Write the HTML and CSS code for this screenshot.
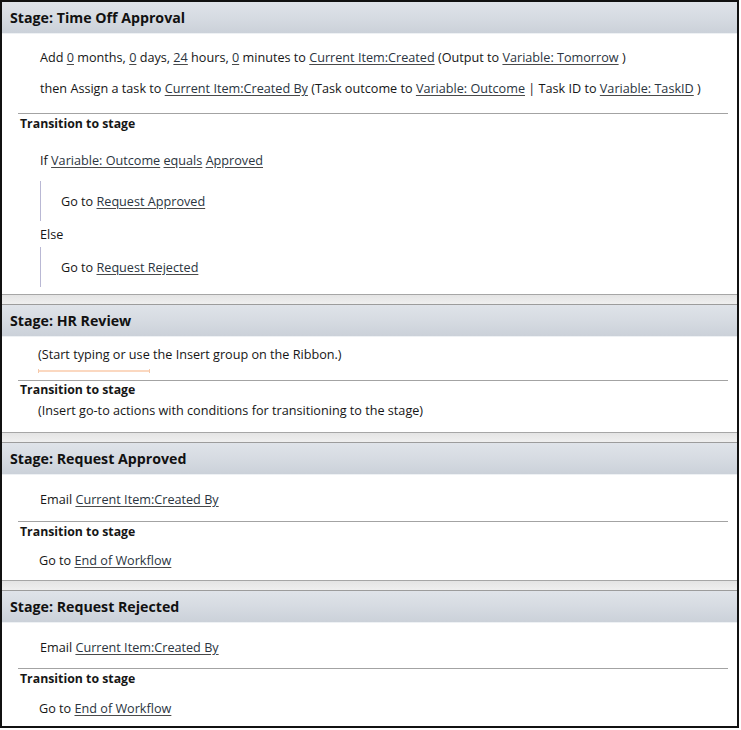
FILE: index.html
```html
<!DOCTYPE html>
<html>
<head>
<meta charset="utf-8">
<link rel="stylesheet" href="styles.css">
</head>
<body>
<div class="frame">
  <section class="stage s1">
    <div class="head">Stage: Time Off Approval</div>
    <div class="body">
      <div class="row r-act">Add <u>0</u> months, <u>0</u> days, <u>24</u> hours, <u>0</u> minutes to <u>Current Item:Created</u> (Output to <u>Variable: Tomorrow</u> )</div>
      <div class="row r-act">then Assign a task to <u>Current Item:Created By</u> (Task outcome to <u>Variable: Outcome</u> | Task ID to <u>Variable: TaskID</u> )</div>
      <div class="sep"></div>
      <div class="trans">Transition to stage</div>
      <div class="row r-if">If <u>Variable: Outcome</u> <u>equals</u> <u>Approved</u></div>
      <div class="branch">Go to <u>Request Approved</u></div>
      <div class="row r-else">Else</div>
      <div class="branch">Go to <u>Request Rejected</u></div>
    </div>
  </section>
  <section class="stage s2">
    <div class="head">Stage: HR Review</div>
    <div class="body">
      <div class="row hint">(Start typing or use the Insert group on the Ribbon.)</div>
      <div class="caret"></div>
      <div class="sep"></div>
      <div class="trans">Transition to stage</div>
      <div class="row hint hint2">(Insert go-to actions with conditions for transitioning to the stage)</div>
    </div>
  </section>
  <section class="stage s3">
    <div class="head">Stage: Request Approved</div>
    <div class="body">
      <div class="row r-email">Email <u>Current Item:Created By</u></div>
      <div class="sep"></div>
      <div class="trans">Transition to stage</div>
      <div class="row r-goto">Go to <u>End of Workflow</u></div>
    </div>
  </section>
  <section class="stage s4">
    <div class="head">Stage: Request Rejected</div>
    <div class="body">
      <div class="row r-email">Email <u>Current Item:Created By</u></div>
      <div class="sep"></div>
      <div class="trans">Transition to stage</div>
      <div class="row r-goto">Go to <u>End of Workflow</u></div>
    </div>
  </section>
</div>
</body>
</html>
```
FILE: styles.css
```css
* { box-sizing: border-box; }
html, body { margin: 0; padding: 0; background: #fff; }
body {
  font-family: "Open Sans", "Noto Sans", "Liberation Sans", sans-serif;
  font-size: 12.65px;
  color: #161616;
}
.frame {
  width: 739px;
  height: 728px;
  border: 2px solid #111;
  overflow: hidden;
  background: #fff;
}
.stage + .stage {
  border-top: 1px solid #a6a6a6;
}
.stage + .stage::before {
  content: "";
  display: block;
  height: 9px;
  background: linear-gradient(#e4e4e4, #efefef);
  border-bottom: 1px solid #9c9c9c;
}
.head {
  height: 32px;
  line-height: 32px;
  padding-left: 8px;
  font-size: 14.2px;
  font-weight: 700;
  color: #111;
  background: linear-gradient(#dfe3e9 0%, #d6dbe2 50%, #cbd1d9 100%);
  border-bottom: 1px solid #eef1f4;
}
.body {
  display: flex;
  flex-direction: column;
  align-items: flex-start;
}
u {
  color: #2b3541;
  text-decoration: underline;
  text-decoration-color: #4a4a4a;
  text-underline-offset: 2px;
}
.row {
  line-height: 18px;
  padding-left: 38px;
  white-space: nowrap;
}
.r-act { line-height: 31px; }
.s1 .body { padding-top: 8px; padding-bottom: 7px; }
.sep {
  align-self: stretch;
  height: 1px;
  background: #a3a3a3;
  margin-left: 16px;
  margin-right: 9px;
}
.s1 .sep { margin-top: 9px; }
.trans {
  font-weight: 700;
  font-size: 12.3px;
  line-height: 18px;
  padding-left: 18px;
  white-space: nowrap;
}
.s1 .trans { line-height: 19px; }
.r-if { margin-top: 17px; line-height: 20px; }
.branch {
  margin-left: 38px;
  margin-top: 11px;
  height: 40px;
  line-height: 40px;
  padding-left: 20px;
  border-left: 1px solid #b9b8d4;
  white-space: nowrap;
}
.r-else { margin-top: 4px; }
.r-else + .branch { margin-top: 4px; }

.s2 .body { padding-top: 8px; padding-bottom: 13px; }
.hint { padding-left: 36px; }
.caret {
  margin-left: 36px;
  margin-top: 6px;
  width: 112px;
  height: 4px;
  border-left: 1px solid #f6c9aa;
  border-right: 1px solid #f6c9aa;
  background: linear-gradient(transparent 1px, #fbd8c0 1px, #fbd8c0 3px, transparent 3px);
}
.s2 .sep { margin-top: 7px; }
.hint2 { margin-top: 2px; }

.s3 .body, .s4 .body { padding-top: 15px; padding-bottom: 11px; }
.r-email { padding-left: 38px; }
.r-email + .sep { margin-top: 13px; }
.s3 .trans { margin-top: 1px; }
.r-goto { padding-left: 37px; margin-top: 10px; }
.s4 .r-email + .sep { margin-top: 12px; }
.s4 .trans { margin-top: 1px; }
.s4 .r-goto { margin-top: 11px; }
```
